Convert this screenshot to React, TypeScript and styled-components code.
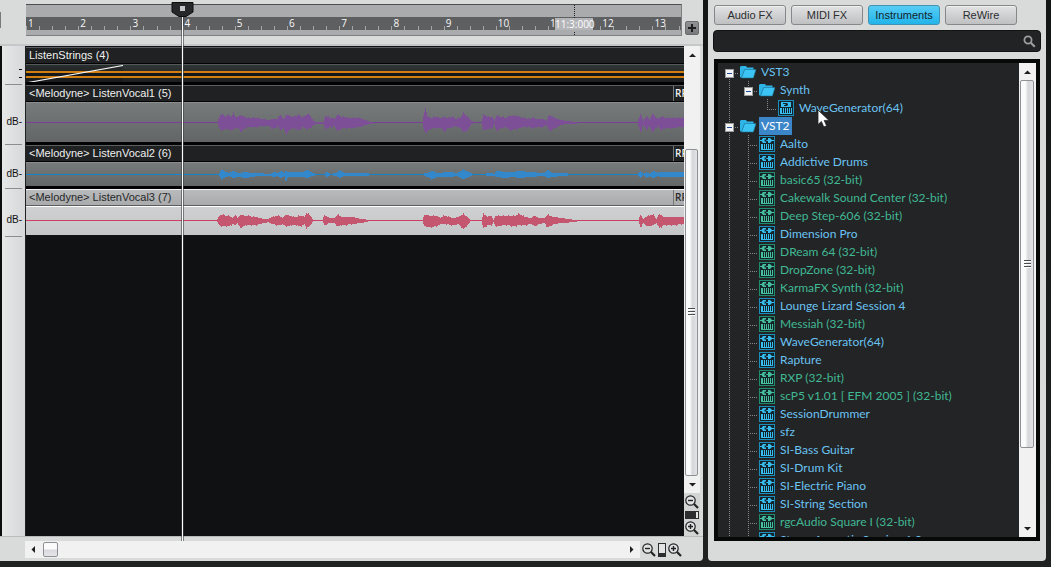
import React from "react";
import styled, { createGlobalStyle, css } from "styled-components";

const GlobalStyle = createGlobalStyle`
  *, *::before, *::after { box-sizing: border-box; }
  body { margin: 0; background: #141616; font-family: "Liberation Sans", Arial, sans-serif; font-size: 11px; }
  button, input { font: inherit; margin: 0; padding: 0; border: 0; background: none; color: inherit; }
  ul { list-style: none; margin: 0; padding: 0; }
`;

const uiFont = `"Open Sans", "Noto Sans", sans-serif`;

/* ---------- shell ---------- */

const Shell = styled.div`
  display: grid;
  grid-template-columns: minmax(0, 1fr) 338px;
  gap: 5px;
  height: 100vh;
  padding: 0 5px 6px 0;
  background: linear-gradient(#141616, #202222);
`;

const Panel = styled.section`
  background: #d9dada;
  border-radius: 0 0 4px 4px;
  min-width: 0;
  min-height: 0;
`;

/* ---------- arrange view ---------- */

const Arrange = styled(Panel)`
  position: relative;
  display: grid;
  grid-template-columns: 26px minmax(0, 1fr) 19px;
  grid-template-rows: 46px minmax(0, 1fr) 25px;
  border-radius: 0 0 4px 0;
`;

const Corner = styled.div`
  padding-top: 12px;
  border-bottom: 2px solid #c6c7c9;
  &::before { content: ""; display: block; width: 1px; height: 16px; background: #77797a; }
`;

const HeaderBar = styled.div`
  padding-top: 4px;
  border-bottom: 2px solid #c6c7c9;
`;

const Ruler = styled.div`
  position: relative;
  height: 32px;
  margin-right: 2px;
  overflow: hidden;
  background: #aaabad;
  border-top: 1px solid #4c4e50;
  border-bottom: 1px solid #7d7f81;
  border-right: 1px solid #7d7f81;
  padding-top: 12px;
`;

const MeasureStrip = styled.div`
  display: flex;
  height: 13px;
  background: #5d5f61;
`;

const Measure = styled.div`
  position: relative;
  flex: 0 0 7.97%;
  display: grid;
  grid-template-columns: repeat(4, 1fr);
  align-items: end;
`;

const Tick = styled.i`
  width: 1px;
  height: 4px;
  background: #a4a6a8;
`;

const MeasureNumber = styled.span`
  position: absolute;
  left: 2px;
  top: 0;
  color: #f8f8f8;
  font: 10px/12px ${uiFont};
`;

const TimeFlag = styled.div`
  position: absolute;
  left: 529px;
  top: 0;
  width: 38px;
  height: 100%;
  display: grid;
  grid-template-rows: 13px 12px 1fr;
  justify-items: center;
  &::before, &::after {
    content: "";
    width: 1px;
    background: repeating-linear-gradient(#222 0 1px, transparent 1px 2px);
  }
  &::after { margin-top: 2px; }
`;

const TimeLabel = styled.span`
  width: 38px;
  background: #b4b5b8;
  color: #fff;
  text-align: center;
  white-space: nowrap;
  font: 10px/12px ${uiFont};
`;

const HeaderTools = styled.div`
  display: flex;
  align-items: flex-start;
  padding: 21px 0 0 1px;
  border-bottom: 2px solid #c6c7c9;
`;

const AddButton = styled.button`
  width: 14px;
  height: 14px;
  background: linear-gradient(#909294, #77797b);
  border: 1px solid #696b6d;
  border-radius: 2px;
  display: grid;
  place-items: center;
`;

const Gutter = styled.div`
  border-left: 2px solid #0c0d0d;
  border-right: 1px solid #202222;
  padding: 0 3px 0 3px;
  background: linear-gradient(90deg, #e6e7e7, #d6d7d9);
`;

const GutterCell = styled.div<{ $h: number; $pad: number }>`
  height: ${p => p.$h}px;
  padding-top: ${p => p.$pad}px;
  border-bottom: 1px solid #8b8d8f;
  text-align: right;
  color: #111;
  font-size: 10px;
  line-height: 12px;
  white-space: nowrap;
`;

const Dash = styled.i`
  display: block;
  width: 3px;
  height: 1px;
  margin: 0 0 7px auto;
  background: #111;
`;

const Lanes = styled.div`
  padding-top: 1px;
  background: #101112;
  overflow: hidden;
`;

const Clip = styled.article`
  border-bottom: 3px solid #020202;
  &:last-child { border-bottom: 0; }
`;

const ClipHeader = styled.header<{ $light?: boolean }>`
  display: flex;
  justify-content: space-between;
  height: 17px;
  padding-left: 3px;
  font-size: 11px;
  line-height: 15px;
  white-space: nowrap;
  overflow: hidden;
  border-top: 1px solid #5c5f60;
  border-bottom: 1px solid #020202;
  background: #1f2122;
  color: #f0f0f0;
  ${p => p.$light && css`
    background: linear-gradient(#b9babb, #a9abac);
    border-top-color: #f4f4f4;
    border-bottom-color: #5b5d5e;
    color: #26282a;
  `}
`;

const ClipTag = styled.span`
  width: 11px;
  padding-left: 1px;
  overflow: hidden;
  border-left: 1px solid #747677;
  font: 600 10px/15px ${uiFont};
`;

const ClipBody = styled.div<{ $h: number; $tone: "dark" | "mid" | "light" }>`
  height: ${p => p.$h}px;
  border-top: 1px solid ${p => (p.$tone === "light" ? "#fff" : p.$tone === "mid" ? "#8a8d8e" : "#54595a")};
  background: ${p =>
    p.$tone === "light"
      ? "linear-gradient(#cfd0d1, #c4c6c7)"
      : p.$tone === "mid"
      ? "linear-gradient(#767a7a, #626666)"
      : "linear-gradient(#303536, #1d1f20)"};
  svg { display: block; width: 100%; height: 100%; }
`;

const Playhead = styled.div`
  position: absolute;
  left: 171px;
  top: 2px;
  bottom: 20px;
  width: 23px;
  pointer-events: none;
  svg { display: block; position: relative; z-index: 1; }
  &::after {
    content: "";
    position: absolute;
    left: 10px;
    top: 14px;
    bottom: 0;
    width: 3px;
    border: solid rgba(60, 63, 65, 0.6);
    border-width: 0 1px;
    background: #fff padding-box;
  }
`;

/* ---------- scroll bars ---------- */

const SideTools = styled.div`
  display: flex;
  flex-direction: column;
  width: 16px;
  min-height: 0;
`;

const ScrollBar = styled.div<{ $across?: boolean }>`
  flex: 1;
  display: flex;
  flex-direction: ${p => (p.$across ? "row" : "column")};
  min-height: 0;
  background: #f1f1f1;
`;

const ScrollArrow = styled.button<{ $across?: boolean }>`
  width: ${p => (p.$across ? 17 : 16)}px;
  height: 17px;
  display: grid;
  place-items: center;
  flex: none;
`;

const ScrollGap = styled.div<{ $grow: number }>`
  flex: ${p => p.$grow} 1 0;
`;

const ScrollThumb = styled.div<{ $grow: number }>`
  flex: ${p => p.$grow} 1 0;
  margin: 0 2px 0 1px;
  border: 1px solid #8e9194;
  border-radius: 2px;
  background: linear-gradient(90deg, #fbfbfb 35%, #d5d6da 60%, #e4e4e8);
  display: grid;
  place-items: center;
`;

const SmallThumb = styled.div`
  flex: none;
  width: 15px;
  height: 15px;
  margin: 1px;
  border: 1px solid #8e9194;
  border-radius: 2px;
  background: linear-gradient(#fbfbfb 45%, #d9d9de 55%, #e6e6ea);
`;

const Grip = styled.i`
  width: 7px;
  height: 8px;
  background: repeating-linear-gradient(#4a4c4e 0 1px, #fff 1px 2px, transparent 2px 3px);
`;

const ZoomStack = styled.div`
  display: flex;
  flex-direction: column;
  align-items: center;
  gap: 2px;
  height: 43px;
  padding-top: 2px;
  background: #d3d4d4;
`;

const IconButton = styled.button`
  width: 14px;
  height: 14px;
  svg { display: block; }
`;

const ZoomLevel = styled.div<{ $tall?: boolean }>`
  width: ${p => (p.$tall ? 8 : 14)}px;
  height: ${p => (p.$tall ? 14 : 8)}px;
  border: 1px solid #2b2d2f;
  background: ${p =>
    p.$tall
      ? "linear-gradient(#e4e4e4 0 9px, #2b2d2f 9px)"
      : "linear-gradient(90deg, #2b2d2f 0 10px, #e4e4e4 10px)"};
`;

const Footer = styled.div`
  grid-column: 1 / -1;
  display: flex;
  align-items: center;
  padding: 1px 21px 0 25px;
  border-top: 1px solid #b9babb;
`;

const FooterBar = styled.div`
  flex: 1;
  display: flex;
  height: 17px;
`;

const FooterZoom = styled.div`
  display: flex;
  gap: 2px;
  padding-left: 2px;
`;

/* ---------- browser panel ---------- */

const Browser = styled(Panel)`
  display: flex;
  flex-direction: column;
  padding: 5px 5px 20px 5px;
`;

const Tabs = styled.div`
  display: flex;
  gap: 5px;
  padding-left: 1px;
`;

const Tab = styled.button<{ $on?: boolean }>`
  width: 72px;
  height: 20px;
  border: 1px solid #85878a;
  border-radius: 3px;
  background: linear-gradient(#e2e2e3, #bfc0c2);
  color: #2c2e30;
  font-size: 11px;
  line-height: 18px;
  box-shadow: inset 0 1px 0 #f1f1f1;
  ${p => p.$on && css`
    background: linear-gradient(#58cdf6, #21b4ea);
    border-color: #4293b3;
    box-shadow: none;
    color: #14242c;
  `}
`;

const SearchBox = styled.label`
  display: flex;
  align-items: center;
  height: 22px;
  margin: 5px 0 7px;
  padding: 0 4px 0 6px;
  background: #212325;
  border: 1px solid #121313;
  border-radius: 4px;
  input { flex: 1; min-width: 0; color: #ddd; outline: 0; }
`;

const TreeFrame = styled.div`
  flex: 1;
  display: flex;
  min-height: 0;
  margin: 0 1px;
  border: 4px solid #070808;
  background: #222425;
`;

const Tree = styled.ul`
  flex: 1;
  min-width: 0;
  overflow: hidden;
  padding-left: 2px;
`;

const TreeScroll = styled.div`
  display: flex;
  width: 17px;
`;

const Row = styled.li`
  position: relative;
  display: flex;
  align-items: center;
  height: 18px;
  color: #6bc3f2;
`;

const dotsV = "repeating-linear-gradient(#85888a 0 1px, transparent 1px 2px)";
const dotsH = "repeating-linear-gradient(90deg, #85888a 0 1px, transparent 1px 2px)";

const Guide = styled.span<{ $down?: "full" | "upper" | "lower"; $arm?: boolean }>`
  flex: none;
  width: 19px;
  height: 18px;
  display: grid;
  place-items: center;
  background-repeat: no-repeat;
  background-image: ${p => [p.$down && dotsV, p.$arm && dotsH].filter(Boolean).join(", ") || "none"};
  background-size: ${p =>
    [p.$down && `1px ${p.$down === "full" ? 18 : 10}px`, p.$arm && "10px 1px"].filter(Boolean).join(", ") || "auto"};
  background-position: ${p =>
    [p.$down && `9px ${p.$down === "lower" ? 8 : 0}px`, p.$arm && "9px 10px"].filter(Boolean).join(", ") || "0 0"};
`;

const Expander = styled.button`
  width: 9px;
  height: 9px;
  margin-top: 2px;
  background: #f4f4f4;
  border: 1px solid #9a9c9e;
  display: grid;
  place-items: center;
  &::before { content: ""; width: 5px; height: 1px; background: #234a9c; }
`;

const RowIcon = styled.span`
  flex: none;
  width: 16px;
  height: 16px;
  margin: 0 3px 0 1px;
  svg { display: block; }
`;

const RowLabel = styled.span<{ $kind?: "old" | "selected" }>`
  height: 18px;
  padding: 0 2px;
  white-space: nowrap;
  font: 12px/18px Lato, "Open Sans", sans-serif;
  color: ${p => (p.$kind === "old" ? "#41b894" : p.$kind === "selected" ? "#fff" : "#6bc3f2")};
  background: ${p => (p.$kind === "selected" ? "#3b86c9" : "none")};
`;

const Pointer = styled.svg`
  position: absolute;
  left: 97px;
  top: 10px;
  z-index: 2;
`;

/* ---------- drawings ---------- */

type Point = [number, number, number];

const PURPLE: Point[] = [
  [191, 0, 0], [193, 5, 5], [195, 8, 7], [199, 5, 6], [201, 7, 6], [205, 5, 7], [207, 9, 6], [209, 5, 5], [212, 5, 5],
  [214, 7, 9], [217, 5, 6], [221, 4, 4], [229, 4, 4], [236, 3, 3], [243, 2, 3], [247, 3, 6], [251, 3, 3], [254, 7, 7],
  [257, 3, 5], [260, 7, 11], [263, 6, 7], [266, 5, 5], [273, 7, 7], [276, 4, 4], [281, 8, 6], [284, 6, 5], [287, 1, 2],
  [289, 0, 1], [297, 0, 1], [299, 6, 6], [304, 4, 4], [308, 3, 3], [311, 7, 8], [316, 5, 5], [323, 4, 5], [333, 4, 4],
  [339, 2, 2], [344, 0, 1], [348, 0, 0], [396, 0, 0], [397, 5, 5], [399, 14, 10], [401, 5, 8], [405, 4, 5], [409, 5, 5],
  [413, 4, 5], [415, 4, 5], [418, 5, 9], [421, 4, 5], [427, 5, 4], [429, 3, 3], [434, 4, 5], [437, 9, 9], [441, 5, 7],
  [445, 1, 1], [447, 0, 0], [455, 0, 0], [457, 7, 7], [461, 5, 6], [466, 5, 5], [468, 1, 1], [470, 6, 8], [474, 5, 5],
  [480, 4, 4], [483, 6, 7], [490, 6, 6], [496, 4, 4], [503, 3, 4], [506, 4, 5], [510, 3, 4], [517, 3, 4], [520, 1, 2],
  [523, 7, 8], [528, 4, 5], [534, 2, 2], [541, 1, 1], [549, 0, 1], [552, 0, 0], [611, 0, 0], [614, 8, 9], [617, 1, 2],
  [620, 6, 7], [623, 2, 3], [626, 8, 9], [630, 4, 4], [632, 3, 3], [634, 5, 7], [640, 4, 5], [658, 4, 4],
];

const BLUE: Point[] = [
  [192, 0, 0], [195, 4, 4], [200, 2, 2], [203, 1, 1], [207, 3, 3], [212, 1, 2], [219, 2, 3], [226, 1, 2], [230, 1, 1],
  [244, 0, 1], [247, 2, 2], [251, 1, 1], [255, 3, 3], [258, 1, 1], [259, 3, 6], [262, 2, 2], [276, 2, 2], [281, 4, 3],
  [286, 1, 1], [290, 0, 0], [298, 0, 0], [300, 2, 2], [304, 0, 0], [310, 1, 1], [313, 4, 3], [318, 1, 1], [335, 1, 1],
  [350, 0, 0], [396, 0, 0], [404, 2, 3], [406, 3, 4], [410, 1, 2], [424, 2, 2], [430, 1, 1], [437, 4, 4], [443, 2, 2],
  [446, 0, 0], [456, 0, 0], [464, 1, 1], [468, 0, 1], [470, 3, 2], [480, 2, 3], [484, 2, 2], [495, 3, 3], [502, 2, 2],
  [508, 2, 2], [512, 1, 1], [518, 1, 1], [521, 4, 3], [526, 1, 2], [535, 1, 1], [548, 0, 0], [611, 0, 0], [614, 3, 3],
  [617, 0, 0], [620, 2, 3], [623, 0, 1], [627, 3, 3], [631, 1, 1], [635, 2, 2], [658, 2, 2],
];

const ROSE: Point[] = [
  [190, 0, 0], [194, 5, 5], [203, 4, 5], [206, 2, 3], [209, 5, 4], [211, 2, 2], [214, 5, 7], [219, 4, 4], [229, 3, 4],
  [238, 1, 2], [242, 1, 1], [246, 3, 3], [252, 4, 4], [256, 2, 3], [259, 5, 5], [268, 3, 4], [275, 4, 5], [278, 3, 3],
  [280, 7, 7], [284, 4, 4], [287, 0, 0], [296, 0, 0], [298, 5, 4], [303, 2, 2], [308, 2, 2], [311, 5, 5], [316, 3, 4],
  [326, 3, 3], [335, 1, 2], [343, 0, 0], [396, 0, 0], [398, 5, 5], [404, 4, 6], [410, 4, 5], [414, 2, 3], [418, 4, 3],
  [427, 2, 4], [432, 3, 3], [437, 6, 8], [442, 2, 3], [444, 0, 0], [455, 0, 0], [457, 6, 7], [461, 3, 4], [465, 4, 4],
  [467, 0, 1], [469, 4, 5], [480, 4, 4], [488, 4, 5], [493, 6, 4], [498, 3, 4], [505, 2, 3], [508, 4, 5], [513, 2, 3],
  [518, 2, 2], [521, 5, 6], [527, 3, 3], [535, 2, 2], [549, 0, 1], [551, 0, 0], [612, 0, 0], [614, 5, 6], [617, 1, 2],
  [621, 4, 5], [627, 5, 4], [630, 1, 2], [633, 6, 7], [637, 3, 4], [645, 3, 4], [658, 3, 3],
];

/* One bar per pixel column between the envelope points, with a little ripple. */
function envelopePath(points: Point[], mid: number): string {
  let d = "";
  for (let i = 0; i + 1 < points.length; i++) {
    const [x0, u0, d0] = points[i];
    const [x1, u1, d1] = points[i + 1];
    for (let x = x0; x < x1; x++) {
      const t = (x - x0) / (x1 - x0);
      const wave = (x * 7) % 5;
      let up = u0 + (u1 - u0) * t;
      let down = d0 + (d1 - d0) * t;
      if (up > 3) up += wave > 3 ? 1 : 0;
      if (down > 3) down += wave < 1 ? 1 : 0;
      up = Math.round(up);
      down = Math.round(down);
      if (up + down > 0) d += `M${x} ${mid - up}h1v${up + down + 1}h-1z`;
    }
  }
  return d;
}

const Wave = ({ points, mid, color, fill }: { points: Point[]; mid: number; color: string; fill: string }) => (
  <svg aria-hidden="true">
    <rect x="0" y={mid} width="100%" height="1" fill={color} />
    <path d={envelopePath(points, mid)} fill={fill} shapeRendering="crispEdges" />
  </svg>
);

const Arrow = ({ dir }: { dir: "up" | "down" | "left" | "right" }) => {
  const d = { up: "M0 6h7L3.500 2.500z", down: "M0 2h7L3.500 5.500z", left: "M5 0v7L1.500 3.500z", right: "M2 0v7L5.500 3.500z" }[dir];
  return (
    <svg width="7" height="7" aria-hidden="true">
      <path d={d} fill="#1c1e20" />
    </svg>
  );
};

const Lens = ({ plus }: { plus?: boolean }) => (
  <svg width="14" height="14" viewBox="0 0 14 14" aria-hidden="true">
    <circle cx="5.500" cy="5.500" r="4.700" fill="#e2e3e3" stroke="#1f2122" strokeWidth="1.200" />
    <path d="M9 9l4 4" stroke="#1f2122" strokeWidth="2.200" />
    <path d={plus ? "M3 5.500h5M5.500 3v5" : "M3 5.500h5"} stroke="#1f2122" strokeWidth="1.400" />
  </svg>
);

const FolderIcon = () => (
  <svg width="16" height="16" viewBox="0 0 16 16" aria-hidden="true">
    <path d="M0 13V3l1-1h5l1 1.500h6.500V6H4.500L1.500 14z" fill="#2db5e8" />
    <path d="M4.600 5.500H16L13.400 14H1.400z" fill="#3cc4f4" stroke="#1c6f92" strokeWidth=".6" />
  </svg>
);

const PluginIcon = ({ color, edge, vst3 }: { color: string; edge: string; vst3?: boolean }) => (
  <svg width="16" height="16" viewBox="0 0 16 16" aria-hidden="true">
    <rect x=".5" y=".5" width="15" height="15" fill="#14222a" stroke={edge} />
    {vst3 ? (
      <>
        <rect x="3" y="2" width="10" height="5" fill={color} />
        <path d="M5 3.500h4.500M7.500 4.500H10M6 5.500h3.500" fill="none" stroke="#14222a" />
      </>
    ) : (
      <path
        d="M1 4h1.500L4 2h3v1.500H5.500v2H7V7H4L2.500 5H1zM7.300 4H9V2h2l2 2h2v1h-2l-2 2H9V5H7.300z"
        fill={color}
      />
    )}
    <path d="M2 8h12v6H2z" fill={color} />
    <path d="M4.500 8v5M6.500 8v5M8.500 8v5M10.500 8v5M12.500 8v5" stroke="#14222a" />
    <path d="M1 7.500h14" stroke="#14222a" />
  </svg>
);

/* ---------- data ---------- */

const PLUGINS = [
  "Aalto", "Addictive Drums", "basic65 (32-bit)", "Cakewalk Sound Center (32-bit)", "Deep Step-606 (32-bit)",
  "Dimension Pro", "DReam 64 (32-bit)", "DropZone (32-bit)", "KarmaFX Synth (32-bit)", "Lounge Lizard Session 4",
  "Messiah (32-bit)", "WaveGenerator(64)", "Rapture", "RXP (32-bit)", "scP5 v1.01 [ EFM 2005 ] (32-bit)",
  "SessionDrummer", "sfz", "SI-Bass Guitar", "SI-Drum Kit", "SI-Electric Piano", "SI-String Section",
  "rgcAudio Square I (32-bit)", "Strum Acoustic Session 1.0",
];

const MEASURES = Array.from({ length: 13 }, (_, i) => i + 1);

const plugin = (old: boolean, vst3 = false) =>
  old ? <PluginIcon color="#45bf9c" edge="#1f8a6c" /> : <PluginIcon color="#37bdf0" edge="#1b8dbb" vst3={vst3} />;

export default function App() {
  return (
    <>
      <GlobalStyle />
      <Shell>
        <Arrange aria-label="Tracks">
          <Corner />
          <HeaderBar>
            <Ruler>
              <MeasureStrip>
                {MEASURES.map(n => (
                  <Measure key={n}>
                    <Tick /><Tick /><Tick /><Tick />
                    <MeasureNumber>{n}</MeasureNumber>
                  </Measure>
                ))}
              </MeasureStrip>
              <TimeFlag><TimeLabel>11:3:000</TimeLabel></TimeFlag>
            </Ruler>
          </HeaderBar>
          <HeaderTools>
            <AddButton aria-label="Add">
              <svg width="8" height="8" aria-hidden="true"><path d="M0 4h8M4 0v8" stroke="#1c1e20" strokeWidth="2" /></svg>
            </AddButton>
          </HeaderTools>

          <Gutter>
            <GutterCell $h={39} $pad={23}><Dash /><Dash /></GutterCell>
            <GutterCell $h={60} $pad={31}>dB-</GutterCell>
            <GutterCell $h={44} $pad={23}>dB-</GutterCell>
            <GutterCell $h={48} $pad={25}>dB-</GutterCell>
          </Gutter>
          <Lanes>
            <Clip>
              <ClipHeader>ListenStrings (4)</ClipHeader>
              <ClipBody $h={18} $tone="dark">
                <svg aria-hidden="true">
                  <rect x="0" y="0" width="97" height="18" fill="#000" opacity=".15" />
                  <rect x="0" y="6" width="100%" height="2" fill="#d37e10" />
                  <rect x="0" y="8" width="100%" height="3" fill="#14181b" />
                  <rect x="0" y="11" width="100%" height="2" fill="#d37e10" />
                  <path d="M2 17.500L97 .5" stroke="#f5f5f5" strokeWidth="1.200" />
                </svg>
              </ClipBody>
            </Clip>
            <Clip>
              <ClipHeader>&lt;Melodyne&gt; ListenVocal1 (5)<ClipTag>RF</ClipTag></ClipHeader>
              <ClipBody $h={40} $tone="mid"><Wave points={PURPLE} mid={19} color="#7a3f9a" fill="#7d4f97" /></ClipBody>
            </Clip>
            <Clip>
              <ClipHeader>&lt;Melodyne&gt; ListenVocal2 (6)<ClipTag>RF</ClipTag></ClipHeader>
              <ClipBody $h={24} $tone="mid"><Wave points={BLUE} mid={11} color="#1583c9" fill="#3388cb" /></ClipBody>
            </Clip>
            <Clip>
              <ClipHeader $light>&lt;Melodyne&gt; ListenVocal3 (7)<ClipTag>RF</ClipTag></ClipHeader>
              <ClipBody $h={29} $tone="light"><Wave points={ROSE} mid={13} color="#cc3f62" fill="#c5566f" /></ClipBody>
            </Clip>
          </Lanes>
          <SideTools>
            <ScrollBar>
              <ScrollArrow aria-label="Scroll up"><Arrow dir="up" /></ScrollArrow>
              <ScrollGap $grow={86} />
              <ScrollThumb $grow={326}><Grip /></ScrollThumb>
              <ScrollArrow aria-label="Scroll down"><Arrow dir="down" /></ScrollArrow>
            </ScrollBar>
            <ZoomStack>
              <IconButton aria-label="Zoom out tracks"><Lens /></IconButton>
              <ZoomLevel />
              <IconButton aria-label="Zoom in tracks"><Lens plus /></IconButton>
            </ZoomStack>
          </SideTools>

          <Footer>
            <FooterBar>
              <ScrollBar $across>
                <ScrollArrow $across aria-label="Scroll left"><Arrow dir="left" /></ScrollArrow>
                <SmallThumb />
                <ScrollGap $grow={1} />
                <ScrollArrow $across aria-label="Scroll right"><Arrow dir="right" /></ScrollArrow>
              </ScrollBar>
            </FooterBar>
            <FooterZoom>
              <IconButton aria-label="Zoom out time"><Lens /></IconButton>
              <ZoomLevel $tall />
              <IconButton aria-label="Zoom in time"><Lens plus /></IconButton>
            </FooterZoom>
          </Footer>

          <Playhead>
            <svg width="23" height="15" aria-hidden="true">
              <path d="M1 .5h21v9.500l-7 4.500H8L1 10z" fill="#26282a" stroke="#0b0c0c" />
              <rect x="9" y="4" width="5" height="5" fill="#c4c6c8" />
            </svg>
          </Playhead>
        </Arrange>

        <Browser aria-label="Browser">
          <Tabs>
            <Tab>Audio FX</Tab>
            <Tab>MIDI FX</Tab>
            <Tab $on>Instruments</Tab>
            <Tab>ReWire</Tab>
          </Tabs>
          <SearchBox>
            <input type="text" aria-label="Search plug-ins" />
            <svg width="13" height="13" viewBox="0 0 13 13" aria-hidden="true">
              <circle cx="5" cy="5" r="3.600" fill="none" stroke="#9b9da0" strokeWidth="1.800" />
              <path d="M7.800 7.800l4 4" stroke="#9b9da0" strokeWidth="2.200" />
            </svg>
          </SearchBox>
          <TreeFrame>
            <Tree>
              <Row>
                <Guide $down="lower" $arm><Expander aria-label="Collapse VST3" /></Guide>
                <RowIcon><FolderIcon /></RowIcon>
                <RowLabel>VST3</RowLabel>
              </Row>
              <Row>
                <Guide $down="full" />
                <Guide $down="upper" $arm><Expander aria-label="Collapse Synth" /></Guide>
                <RowIcon><FolderIcon /></RowIcon>
                <RowLabel>Synth</RowLabel>
              </Row>
              <Row>
                <Guide $down="full" />
                <Guide />
                <Guide $down="upper" $arm />
                <RowIcon>{plugin(false, true)}</RowIcon>
                <RowLabel>WaveGenerator(64)</RowLabel>
                <Pointer width="13" height="19" viewBox="0 0 13 19" aria-hidden="true">
                  <path d="M1 1v14.500l3.400-3 2.400 5.500 2.800-1.200-2.400-5.400H12z" fill="#fff" stroke="#222" strokeWidth=".8" />
                </Pointer>
              </Row>
              <Row>
                <Guide $down="full" $arm><Expander aria-label="Collapse VST2" /></Guide>
                <RowIcon><FolderIcon /></RowIcon>
                <RowLabel $kind="selected">VST2</RowLabel>
              </Row>
              {PLUGINS.map(name => {
                const old = name.includes("32-bit");
                return (
                  <Row key={name}>
                    <Guide $down="full" />
                    <Guide $down="full" $arm />
                    <RowIcon>{plugin(old)}</RowIcon>
                    <RowLabel $kind={old ? "old" : undefined}>{name}</RowLabel>
                  </Row>
                );
              })}
            </Tree>
            <TreeScroll>
              <ScrollBar>
                <ScrollArrow aria-label="Scroll list up"><Arrow dir="up" /></ScrollArrow>
                <ScrollThumb $grow={368}><Grip /></ScrollThumb>
                <ScrollGap $grow={72} />
                <ScrollArrow aria-label="Scroll list down"><Arrow dir="down" /></ScrollArrow>
              </ScrollBar>
            </TreeScroll>
          </TreeFrame>
        </Browser>
      </Shell>
    </>
  );
}
